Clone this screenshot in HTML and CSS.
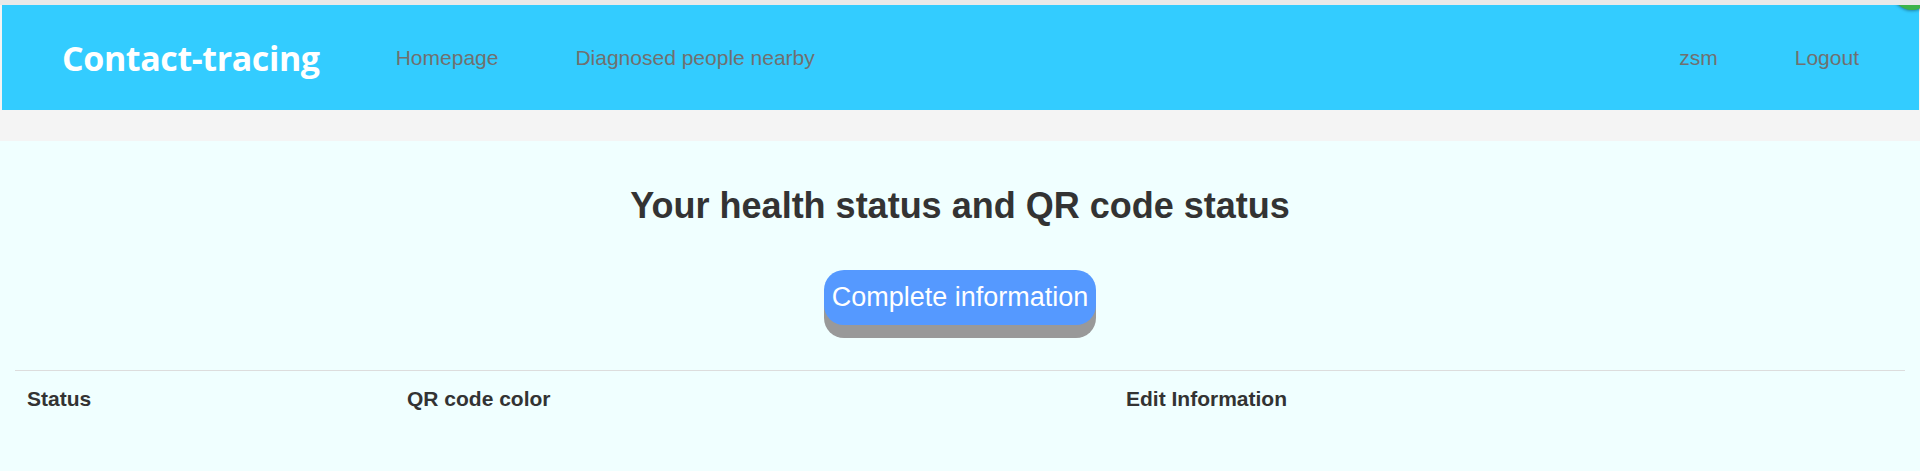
FILE: index.html
```html
<!DOCTYPE html>
<html lang="en">
<head>
<meta charset="utf-8">
<title>Contact-tracing</title>
<link rel="stylesheet" href="styles.css">
</head>
<body>
<header class="navbar">
  <a class="brand" href="#">Contact-tracing</a>
  <nav class="nav-main">
    <a class="nav-link" href="#">Homepage</a>
    <a class="nav-link" href="#">Diagnosed people nearby</a>
  </nav>
  <nav class="nav-user">
    <a class="nav-link" href="#">zsm</a>
    <a class="nav-link" href="#">Logout</a>
  </nav>
</header>
<div class="spacer"></div>
<main class="panel">
  <div class="intro">
    <h1 class="title">Your health status and QR code status</h1>
    <button class="btn-complete" type="button">Complete information</button>
  </div>
  <table class="status-table">
    <colgroup>
      <col class="col-status">
      <col class="col-color">
      <col class="col-edit">
    </colgroup>
    <thead>
      <tr>
        <th>Status</th>
        <th>QR code color</th>
        <th>Edit Information</th>
      </tr>
    </thead>
    <tbody></tbody>
  </table>
</main>
<span class="corner-badge"></span>
</body>
</html>
```

FILE: styles.css
```css
* { box-sizing: border-box; }

html, body {
  margin: 0;
  padding: 0;
}

body {
  background: #f4f4f4;
  border-top: 5px solid #e9e9e9;
  font-family: "Liberation Sans", Arial, sans-serif;
  color: #333333;
  height: 471px;
  overflow: hidden;
  position: relative;
}

.navbar {
  display: flex;
  align-items: center;
  height: 105px;
  margin: 0 1px 0 2px;
  padding: 0 60px;
  background: #33ccff;
}

.brand {
  font-family: "Open Sans", "Noto Sans", sans-serif;
  font-weight: 700;
  font-size: 34px;
  letter-spacing: -0.4px;
  color: #ffffff;
  text-decoration: none;
  margin-right: 76px;
}

.nav-main,
.nav-user {
  display: flex;
  gap: 77px;
}

.nav-user {
  margin-left: auto;
}

.nav-link {
  font-size: 21px;
  color: #707070;
  text-decoration: none;
}

.spacer {
  height: 31px;
}

.panel {
  background: #f0ffff;
  padding: 43px 15px 44px;
}

.intro {
  text-align: center;
}

.title {
  margin: 0 0 43px;
  font-size: 36px;
  line-height: 1.2;
  font-weight: 700;
  color: #333333;
}

.btn-complete {
  display: inline-block;
  height: 55px;
  padding: 0 8px;
  margin: 0 0 45px;
  border: none;
  border-radius: 20px;
  background: #5599ff;
  color: #ffffff;
  font-family: "Liberation Sans", Arial, sans-serif;
  font-size: 27px;
  box-shadow: 0 13px 0 #999999;
}

.status-table {
  width: 100%;
  border-collapse: collapse;
}

.col-status { width: 380px; }
.col-color { width: 719px; }

.status-table th {
  text-align: left;
  padding: 12px;
  font-size: 21px;
  line-height: 1.5;
  font-weight: 700;
  color: #333333;
  border-top: 1px solid #dddddd;
}

.corner-badge {
  position: absolute;
  top: -35px;
  right: -12px;
  width: 40px;
  height: 40px;
  border-radius: 50%;
  background: #3cb44a;
  box-shadow: 0 0 3px 1px rgba(0,0,0,0.35);
}
```
